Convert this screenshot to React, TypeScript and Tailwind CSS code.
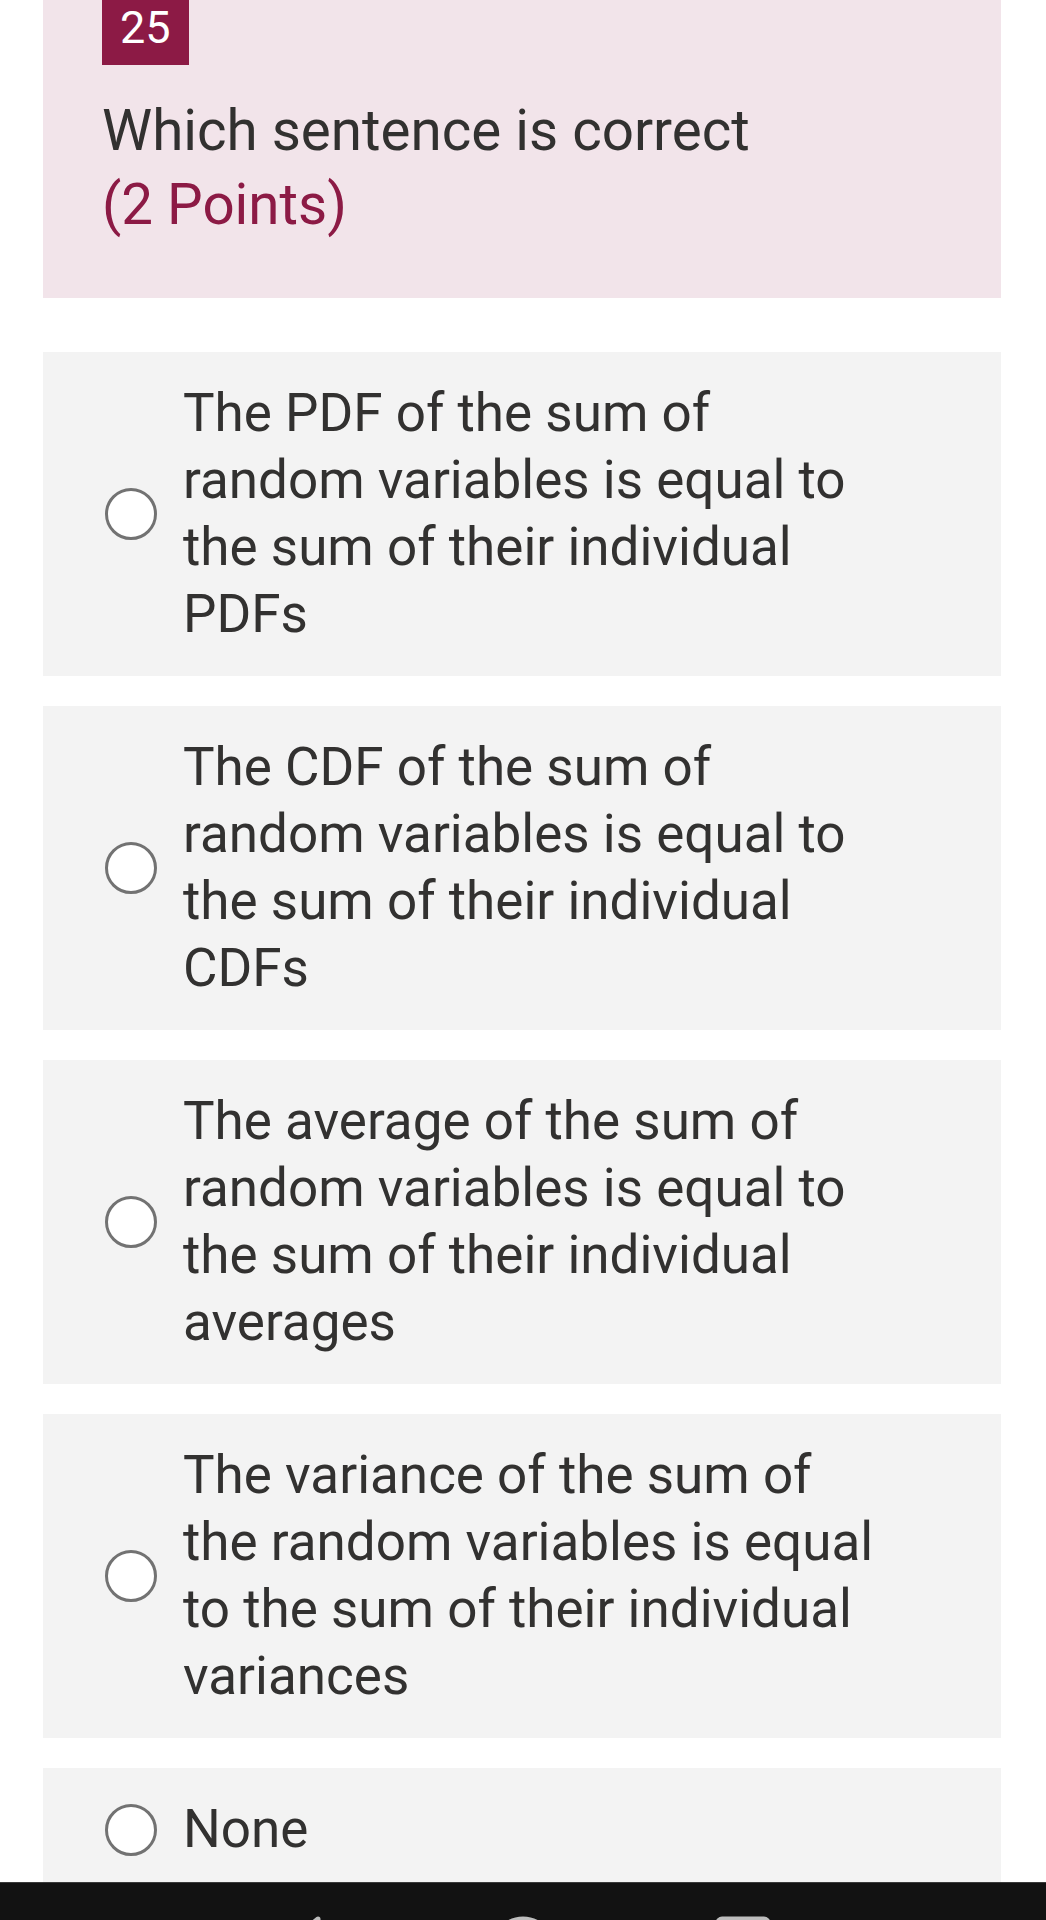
const OPTIONS = [
  'The PDF of the sum of random variables is equal to the sum of their individual PDFs',
  'The CDF of the sum of random variables is equal to the sum of their individual CDFs',
  'The average of the sum of random variables is equal to the sum of their individual averages',
  'The variance of the sum of the random variables is equal to the sum of their individual variances',
  'None',
]

function Radio() {
  return (
    <span className="shrink-0 w-[52px] h-[52px] rounded-full border-[3px] border-[#727272] bg-white" />
  )
}

function NavBar() {
  return (
    <div className="h-[38px] shrink-0 bg-[#121212] border-t border-[#3a3a3a] overflow-hidden flex justify-center gap-[150px] pt-[32px]">
      <svg width="70" height="70" viewBox="0 0 70 70" fill="none" stroke="#bdbdbd" strokeWidth="5">
        <path d="M50 4 L14 33 L50 62 Z" strokeLinejoin="round" />
      </svg>
      <svg width="70" height="70" viewBox="0 0 70 70" fill="none" stroke="#bdbdbd" strokeWidth="5">
        <circle cx="35" cy="33" r="29" />
      </svg>
      <svg width="70" height="70" viewBox="0 0 70 70" fill="none" stroke="#bdbdbd" strokeWidth="5">
        <rect x="10" y="4" width="50" height="56" rx="4" />
      </svg>
    </div>
  )
}

export default function App() {
  return (
    <div className="h-[1920px] w-[1046px] flex flex-col bg-white overflow-hidden font-['Roboto','Noto_Sans',sans-serif] text-[#323130]">
      <div className="flex-1 overflow-hidden pl-[43px] pr-[45px]">
        <section className="bg-[#f2e4ea] pl-[59px] pr-8 pb-[56px]">
          <div className="inline-block h-[65px] px-[18px] bg-[#8c1a45] text-white text-[45px] leading-[55px]">
            25
          </div>
          <div className="mt-[29px] text-[56.5px] leading-[74px]">
            <div>Which sentence is correct</div>
            <div className="text-[#8c1a45]">(2 Points)</div>
          </div>
        </section>

        <div className="mt-[54px] flex flex-col gap-[30px]">
          {OPTIONS.map(o => (
            <label
              key={o}
              className="flex items-center gap-[26px] bg-[#f3f3f3] pl-[62px] pt-[28px] pb-[28px]"
            >
              <Radio />
              <span className="w-[704px] text-[53px] leading-[67px]">{o}</span>
            </label>
          ))}
        </div>
      </div>
      <NavBar />
    </div>
  )
}
